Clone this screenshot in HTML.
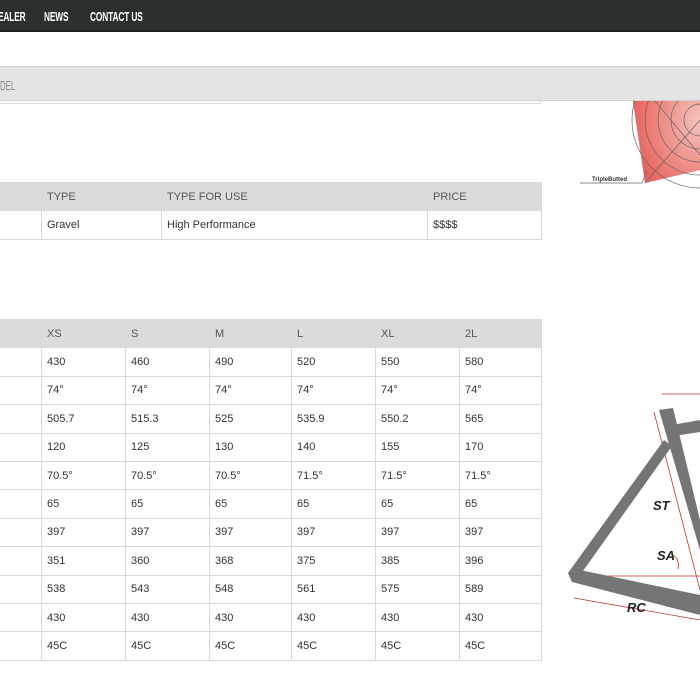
<!DOCTYPE html>
<html><head><style>
*{margin:0;padding:0;box-sizing:border-box}
body{width:700px;height:700px;overflow:hidden;background:#fff;position:relative;font-family:"Liberation Sans",Arial,sans-serif;font-size:11px;color:#333}
.nav{position:absolute;left:0;top:0;width:700px;height:32px;background:#2c2f30;border-bottom:2px solid #1e2021}
.nav span{position:absolute;top:9px;color:#fff;font-family:"Liberation Sans Narrow","Liberation Sans",sans-serif;font-weight:bold;font-size:13px;transform:scaleX(.64);transform-origin:left;letter-spacing:-.2px}
.band{position:absolute;left:0;top:66px;width:700px;height:35px;background:#e4e4e4;border-top:1px solid #d6d6d6;border-bottom:1px solid #d0d0d0}
.band span{position:absolute;left:0;top:11px;color:#888;font-size:13px;transform:scaleX(.6);transform-origin:left}
table{position:absolute;border-collapse:collapse;left:-1px}
td{border:1px solid #d9d9d9;padding-left:5px;height:28.4px;font-size:11px;color:#333}
tr.h td{background:#dcdcdc;color:#555;font-size:11px}
</style></head><body>
<div class="nav"><span style="left:-2px">EALER</span><span style="left:44px">NEWS</span><span style="left:90px">CONTACT US</span></div>
<div style="position:absolute;left:0;top:101px;width:541px;height:3px;border-bottom:1px solid #ddd;border-right:1px solid #ddd"></div>
<svg style="position:absolute;left:570px;top:95px" width="130" height="95">
<defs><radialGradient id="g" cx="1" cy=".3" r="1"><stop offset="0" stop-color="#f4c4bd"/><stop offset="1" stop-color="#e8625a"/></radialGradient></defs>
<polygon points="62,0 130,0 130,75 75,88" fill="url(#g)"/>
<g fill="none" stroke="#666" stroke-width=".7">
<circle cx="130" cy="25" r="68"/><circle cx="130" cy="25" r="55"/><circle cx="130" cy="25" r="42"/><circle cx="130" cy="25" r="29"/><circle cx="130" cy="25" r="16"/>
<line x1="75" y1="88" x2="130" y2="25"/><line x1="80" y1="0" x2="130" y2="60"/>
<polyline points="10,88 72,88 77,75"/></g>
<text x="22" y="86" font-size="6" font-weight="bold" fill="#333" font-family="Liberation Sans">TripleButted</text>
</svg>
<div class="band"><span>DEL</span></div>
<table style="top:182px;width:543px">
<tr class="h"><td style="width:42px"></td><td style="width:120px">TYPE</td><td style="width:266px">TYPE FOR USE</td><td>PRICE</td></tr>
<tr><td></td><td>Gravel</td><td>High Performance</td><td>$$$$</td></tr>
</table>
<table style="top:319px;width:543px">
<tr class="h"><td style="width:42px"></td><td style="width:84px">XS</td><td style="width:84px">S</td><td style="width:82px">M</td><td style="width:84px">L</td><td style="width:84px">XL</td><td>2L</td></tr>
<tr><td></td><td>430</td><td>460</td><td>490</td><td>520</td><td>550</td><td>580</td></tr>
<tr><td></td><td>74°</td><td>74°</td><td>74°</td><td>74°</td><td>74°</td><td>74°</td></tr>
<tr><td></td><td>505.7</td><td>515.3</td><td>525</td><td>535.9</td><td>550.2</td><td>565</td></tr>
<tr><td></td><td>120</td><td>125</td><td>130</td><td>140</td><td>155</td><td>170</td></tr>
<tr><td></td><td>70.5°</td><td>70.5°</td><td>70.5°</td><td>71.5°</td><td>71.5°</td><td>71.5°</td></tr>
<tr><td></td><td>65</td><td>65</td><td>65</td><td>65</td><td>65</td><td>65</td></tr>
<tr><td></td><td>397</td><td>397</td><td>397</td><td>397</td><td>397</td><td>397</td></tr>
<tr><td></td><td>351</td><td>360</td><td>368</td><td>375</td><td>385</td><td>396</td></tr>
<tr><td></td><td>538</td><td>543</td><td>548</td><td>561</td><td>575</td><td>589</td></tr>
<tr><td></td><td>430</td><td>430</td><td>430</td><td>430</td><td>430</td><td>430</td></tr>
<tr><td></td><td>45C</td><td>45C</td><td>45C</td><td>45C</td><td>45C</td><td>45C</td></tr>
</table>
<svg style="position:absolute;left:550px;top:380px" width="150" height="240">
<g stroke="#c0392b" stroke-width=".8" fill="none">
<line x1="112" y1="14" x2="150" y2="14"/><line x1="104" y1="32" x2="150" y2="210"/>
<line x1="28" y1="196" x2="150" y2="196"/><line x1="24" y1="218" x2="150" y2="240"/>
<path d="M122,175 q8,3 6,14"/>
</g>
<g fill="#757575">
<polygon points="109,30 123,28 150,140 150,170"/>
<polygon points="122,45 150,40 150,52 124,56"/>
<polygon points="114,60 122,66 28,198 18,193"/>
<polygon points="18,193 30,190 150,215 150,235 22,202"/>
</g>
<g font-family="Liberation Sans" font-weight="bold" font-style="italic" font-size="13" fill="#222">
<text x="103" y="130">ST</text><text x="107" y="180">SA</text><text x="77" y="232">RC</text></g>
</svg>
</body></html>
